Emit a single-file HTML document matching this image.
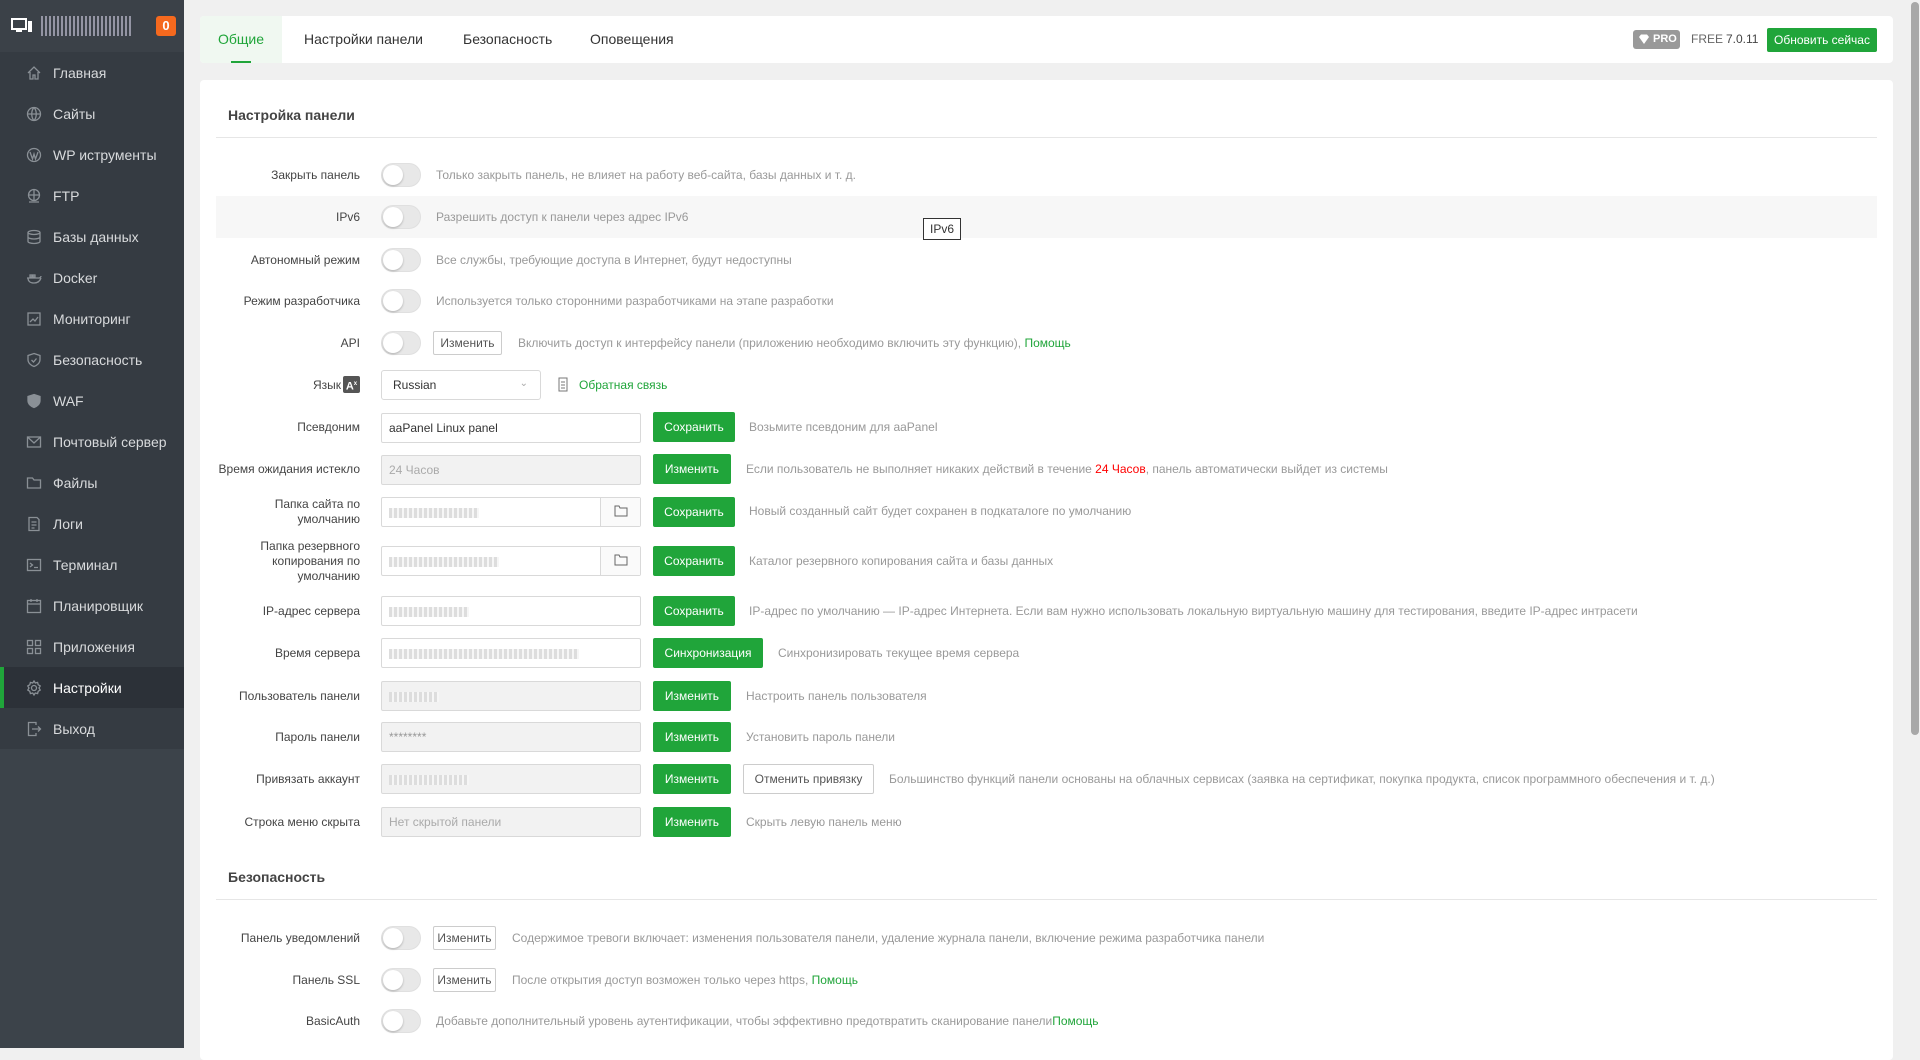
<!DOCTYPE html>
<html><head><meta charset="utf-8">
<style>
*{box-sizing:border-box;margin:0;padding:0}
body{width:1920px;height:1048px;overflow:hidden;background:#f0f0f0;font-family:"Liberation Sans","Noto Sans CJK SC",sans-serif;font-size:12px;color:#555;position:relative}
.sb{position:absolute;left:0;top:0;width:184px;height:1048px;background:#3c434a}
.logo{position:absolute;left:0;top:0;width:184px;height:52px;background:#3b4148}
.menu{position:absolute;left:0;top:52px;width:184px;background:#353b42}
.mi{height:41px;display:flex;align-items:center;padding-left:26px;color:#d8dadc;font-size:14px;position:relative}
.mi svg{width:16px;height:16px;margin-right:11px;stroke:#8a9096;fill:none;stroke-width:1.3}
.mi.act{background:#2c3138;color:#fff}
.mi.act:before{content:"";position:absolute;left:0;top:0;width:4px;height:41px;background:#20a53a}
.tabs{position:absolute;left:200px;top:16px;width:1693px;height:47px;background:#fff;border-radius:4px}
.tab{position:absolute;top:0;height:47px;line-height:47px;font-size:14px;color:#333}
.card{position:absolute;left:200px;top:80px;width:1693px;height:980px;background:#fff;border-radius:4px}
.h{position:absolute;left:228px;font-size:14px;font-weight:bold;color:#444}
.hl{position:absolute;left:216px;width:1661px;height:1px;background:#e6e6e6}
.lab{position:absolute;left:216px;width:144px;text-align:right;font-size:12px;color:#444;line-height:15px}
.tg{position:absolute;left:381px;width:40px;height:24px;border-radius:12px;background:#e8e8e8;border:1px solid #e0e0e0}
.tg:after{content:"";position:absolute;left:1px;top:1px;width:20px;height:20px;border-radius:50%;background:#fff;box-shadow:0 1px 2px rgba(0,0,0,.25)}
.d{position:absolute;font-size:12px;color:#999;white-space:nowrap}
.in{position:absolute;left:381px;width:260px;height:30px;border:1px solid #d9d9d9;border-radius:2px;background:#fff;font-size:12px;color:#333;line-height:28px;padding-left:7px}
.in.dis{background:#f2f2f2;color:#aaa}
.blur{display:inline-block;width:90px;height:10px;vertical-align:middle;background:repeating-linear-gradient(90deg,#ddd 0 3px,#f6f6f6 3px 5px)}
.fb{position:absolute;right:0;top:0;width:40px;height:28px;border-left:1px solid #d9d9d9;background:#fafafa}
.gb{position:absolute;left:653px;height:30px;line-height:30px;background:#20a53a;color:#fff;font-size:12px;text-align:center;border-radius:2px}
.wb{position:absolute;height:24px;line-height:22px;border:1px solid #ccc;background:#fff;color:#555;font-size:12px;text-align:center;border-radius:2px}
.g{color:#20a53a}
</style></head><body>
<div class="sb">
 <div class="logo">
  <svg style="position:absolute;left:11px;top:18px" width="22" height="16" viewBox="0 0 22 16"><rect x="1" y="1" width="14" height="10" fill="none" stroke="#fff" stroke-width="2"/><rect x="5" y="12" width="6" height="2" fill="#fff"/><rect x="17" y="3" width="4" height="11" fill="#fff"/></svg>
  <div style="position:absolute;left:41px;top:16px;width:92px;height:20px;background:repeating-linear-gradient(90deg,#aab 0 2px,#3b4148 2px 4px);opacity:.8"></div>
  <div style="position:absolute;left:156px;top:16px;width:20px;height:20px;background:#f5691e;border-radius:3px;color:#fff;font-weight:bold;font-size:13px;text-align:center;line-height:20px">0</div>
 </div>
 <div class="menu">
  <div class="mi"><svg viewBox="0 0 16 16"><path d="M2 8L8 2l6 6M4 7v7h3v-4h2v4h3V7"/></svg>Главная</div>
  <div class="mi"><svg viewBox="0 0 16 16"><circle cx="8" cy="8" r="6.5"/><path d="M1.5 8h13M8 1.5c-3 3-3 10 0 13M8 1.5c3 3 3 10 0 13"/></svg>Сайты</div>
  <div class="mi"><svg viewBox="0 0 16 16"><circle cx="8" cy="8" r="6.5"/><path d="M4 5l2.5 7L8 7l1.5 5L12 5"/></svg>WP иструменты</div>
  <div class="mi"><svg viewBox="0 0 16 16"><circle cx="8" cy="7" r="5.5"/><path d="M2.5 7h11M8 1.5v11M3 14h10"/></svg>FTP</div>
  <div class="mi"><svg viewBox="0 0 16 16"><ellipse cx="8" cy="3.5" rx="6" ry="2"/><path d="M2 3.5v9c0 1.1 2.7 2 6 2s6-.9 6-2v-9M2 8c0 1.1 2.7 2 6 2s6-.9 6-2"/></svg>Базы данных</div>
  <div class="mi"><svg viewBox="0 0 16 16"><path d="M1 8h12c1 0 2-1 2-2M2 8c0 3 2 5 6 5s6-2 7-5" /><rect x="4" y="5" width="2" height="2"/><rect x="7" y="5" width="2" height="2"/></svg>Docker</div>
  <div class="mi"><svg viewBox="0 0 16 16"><rect x="2" y="2" width="12" height="12"/><path d="M4 11l3-3 2 2 3-4"/></svg>Мониторинг</div>
  <div class="mi"><svg viewBox="0 0 16 16"><path d="M8 1.5l6 2v4c0 3.5-3 6-6 7-3-1-6-3.5-6-7v-4z M5.5 8l2 2 3-3.5"/></svg>Безопасность</div>
  <div class="mi"><svg viewBox="0 0 16 16"><path d="M8 1.5l6 2v4c0 3.5-3 6-6 7-3-1-6-3.5-6-7v-4z" fill="#8a9096"/></svg>WAF</div>
  <div class="mi"><svg viewBox="0 0 16 16"><rect x="1.5" y="3" width="13" height="10"/><path d="M1.5 3L8 9l6.5-6"/></svg>Почтовый сервер</div>
  <div class="mi"><svg viewBox="0 0 16 16"><path d="M1.5 3h5l1.5 2h6.5v8h-13z"/></svg>Файлы</div>
  <div class="mi"><svg viewBox="0 0 16 16"><path d="M3 1.5h8l2 2v11H3zM5.5 6h5M5.5 9h5M5.5 12h3"/></svg>Логи</div>
  <div class="mi"><svg viewBox="0 0 16 16"><rect x="1.5" y="2.5" width="13" height="11"/><path d="M4 6l2.5 2L4 10M8 10.5h4"/></svg>Терминал</div>
  <div class="mi"><svg viewBox="0 0 16 16"><rect x="1.5" y="2.5" width="13" height="12"/><path d="M1.5 6h13M5 1v3M11 1v3"/></svg>Планировщик</div>
  <div class="mi"><svg viewBox="0 0 16 16"><rect x="1.5" y="1.5" width="5" height="5"/><rect x="9.5" y="1.5" width="5" height="5"/><rect x="1.5" y="9.5" width="5" height="5"/><rect x="9.5" y="9.5" width="5" height="5"/></svg>Приложения</div>
  <div class="mi act"><svg viewBox="0 0 16 16"><circle cx="8" cy="8" r="2.5"/><path d="M8 1l1.3 2 2.3-.6.6 2.3 2 1.3-1.2 2 1.2 2-2 1.3-.6 2.3-2.3-.6L8 15l-1.3-2-2.3.6-.6-2.3-2-1.3 1.2-2-1.2-2 2-1.3.6-2.3 2.3.6z"/></svg>Настройки</div>
  <div class="mi"><svg viewBox="0 0 16 16"><path d="M10 4V1.5H2.5v13H10V12M6 8h8.5M12 5.5L14.5 8 12 10.5"/></svg>Выход</div>
 </div>
</div>

<div class="tabs">
 <div style="position:absolute;left:0;top:0;width:82px;height:47px;background:#f0f8f1;border-radius:4px 0 0 4px"></div>
 <div class="tab" style="left:18px;color:#20a53a">Общие</div>
 <div style="position:absolute;left:31px;top:45px;width:20px;height:2px;background:#20a53a"></div>
 <div class="tab" style="left:104px">Настройки панели</div>
 <div class="tab" style="left:263px">Безопасность</div>
 <div class="tab" style="left:390px">Оповещения</div>
 <div style="position:absolute;left:1433px;top:14px;width:47px;height:19px;background:#999;border-radius:3px;color:#fff;font-size:11px;font-weight:bold;line-height:19px;padding-left:20px">PRO<svg style="position:absolute;left:5px;top:4px" width="12" height="11" viewBox="0 0 12 11"><path d="M1 3l2-2.5h6L11 3 6 10z" fill="#fff"/></svg></div>
 <div style="position:absolute;left:1491px;top:16px;font-size:12px;color:#666">FREE</div>
 <div style="position:absolute;left:1526px;top:16px;font-size:12px;color:#444">7.0.11</div>
 <div style="position:absolute;left:1567px;top:12px;width:110px;height:24px;background:#20a53a;color:#fff;font-size:12px;line-height:24px;text-align:center;border-radius:2px">Обновить сейчас</div>
</div>

<div class="card"></div>
<div style="position:absolute;left:1910px;top:0;width:10px;height:1048px;background:#f0f0f0"></div>
<div style="position:absolute;left:1911px;top:2px;width:8px;height:733px;background:#a8a8a8;border-radius:4px"></div>

<div class="h" style="top:107px">Настройка панели</div>
<div class="hl" style="top:137px"></div>
<div style="position:absolute;left:216px;top:196px;width:1661px;height:42px;background:#f7f7f7"></div>

<div class="lab" style="top:168px">Закрыть панель</div><div class="tg" style="top:163px"></div>
<div class="d" style="left:436px;top:168px">Только закрыть панель, не влияет на работу веб-сайта, базы данных и т. д.</div>

<div class="lab" style="top:210px">IPv6</div><div class="tg" style="top:205px"></div>
<div class="d" style="left:436px;top:210px">Разрешить доступ к панели через адрес IPv6</div>
<div style="position:absolute;left:923px;top:218px;width:38px;height:22px;border:1px solid #333;background:#fff;font-size:12px;color:#333;text-align:center;line-height:20px">IPv6</div>

<div class="lab" style="top:253px">Автономный режим</div><div class="tg" style="top:248px"></div>
<div class="d" style="left:436px;top:253px">Все службы, требующие доступа в Интернет, будут недоступны</div>

<div class="lab" style="top:294px">Режим разработчика</div><div class="tg" style="top:289px"></div>
<div class="d" style="left:436px;top:294px">Используется только сторонними разработчиками на этапе разработки</div>

<div class="lab" style="top:336px">API</div><div class="tg" style="top:331px"></div>
<div class="wb" style="left:433px;top:331px;width:69px">Изменить</div>
<div class="d" style="left:518px;top:336px">Включить доступ к интерфейсу панели (приложению необходимо включить эту функцию), <span class="g">Помощь</span></div>

<div class="lab" style="top:378px;width:125px">Язык</div>
<div style="position:absolute;left:343px;top:376px;width:17px;height:17px;background:#555;color:#fff;font-size:11px;font-weight:bold;text-align:center;line-height:17px;border-radius:2px">A<sup style="font-size:6px">x</sup></div>
<div class="in" style="top:370px;width:160px;height:30px;padding-left:11px;border-radius:3px">Russian<span style="position:absolute;right:12px;top:-1px;color:#aaa;font-size:10px">&#8964;</span></div>
<svg style="position:absolute;left:558px;top:377px" width="13" height="15" viewBox="0 0 13 15"><path d="M1 1h8v13H1zM3 5h4M3 8h4M3 11h4" fill="none" stroke="#777"/></svg>
<div class="d" style="left:579px;top:378px;color:#20a53a">Обратная связь</div>

<div class="lab" style="top:420px">Псевдоним</div>
<div class="in" style="top:413px">aaPanel Linux panel</div>
<div class="gb" style="top:412px;width:82px">Сохранить</div>
<div class="d" style="left:749px;top:420px">Возьмите псевдоним для aaPanel</div>

<div class="lab" style="top:462px">Время ожидания истекло</div>
<div class="in dis" style="top:455px">24 Часов</div>
<div class="gb" style="top:454px;width:78px">Изменить</div>
<div class="d" style="left:746px;top:462px">Если пользователь не выполняет никаких действий в течение <span style="color:#f00">24 Часов</span>, панель автоматически выйдет из системы</div>

<div class="lab" style="top:497px">Папка сайта по<br>умолчанию</div>
<div class="in" style="top:497px"><span class="blur"></span><div class="fb"><svg style="margin:7px 13px" width="14" height="12" viewBox="0 0 14 12"><path d="M1 1h4l1 2h7v8H1z" fill="none" stroke="#666"/></svg></div></div>
<div class="gb" style="top:497px;width:82px">Сохранить</div>
<div class="d" style="left:749px;top:504px">Новый созданный сайт будет сохранен в подкаталоге по умолчанию</div>

<div class="lab" style="top:539px">Папка резервного<br>копирования по<br>умолчанию</div>
<div class="in" style="top:546px"><span class="blur" style="width:110px"></span><div class="fb"><svg style="margin:7px 13px" width="14" height="12" viewBox="0 0 14 12"><path d="M1 1h4l1 2h7v8H1z" fill="none" stroke="#666"/></svg></div></div>
<div class="gb" style="top:546px;width:82px">Сохранить</div>
<div class="d" style="left:749px;top:554px">Каталог резервного копирования сайта и базы данных</div>

<div class="lab" style="top:604px">IP-адрес сервера</div>
<div class="in" style="top:596px"><span class="blur" style="width:80px"></span></div>
<div class="gb" style="top:596px;width:82px">Сохранить</div>
<div class="d" style="left:749px;top:604px">IP-адрес по умолчанию — IP-адрес Интернета. Если вам нужно использовать локальную виртуальную машину для тестирования, введите IP-адрес интрасети</div>

<div class="lab" style="top:646px">Время сервера</div>
<div class="in" style="top:638px"><span class="blur" style="width:190px"></span></div>
<div class="gb" style="top:638px;width:110px">Синхронизация</div>
<div class="d" style="left:778px;top:646px">Синхронизировать текущее время сервера</div>

<div class="lab" style="top:689px">Пользователь панели</div>
<div class="in dis" style="top:681px"><span class="blur" style="width:50px"></span></div>
<div class="gb" style="top:681px;width:78px">Изменить</div>
<div class="d" style="left:746px;top:689px">Настроить панель пользователя</div>

<div class="lab" style="top:730px">Пароль панели</div>
<div class="in dis" style="top:722px;color:#999">********</div>
<div class="gb" style="top:722px;width:78px">Изменить</div>
<div class="d" style="left:746px;top:730px">Установить пароль панели</div>

<div class="lab" style="top:772px">Привязать аккаунт</div>
<div class="in dis" style="top:764px"><span class="blur" style="width:80px"></span></div>
<div class="gb" style="top:764px;width:78px">Изменить</div>
<div class="wb" style="left:743px;top:764px;width:131px;height:30px;line-height:28px">Отменить привязку</div>
<div class="d" style="left:889px;top:772px">Большинство функций панели основаны на облачных сервисах (заявка на сертификат, покупка продукта, список программного обеспечения и т. д.)</div>

<div class="lab" style="top:815px">Строка меню скрыта</div>
<div class="in dis" style="top:807px">Нет скрытой панели</div>
<div class="gb" style="top:807px;width:78px">Изменить</div>
<div class="d" style="left:746px;top:815px">Скрыть левую панель меню</div>

<div class="h" style="top:869px">Безопасность</div>
<div class="hl" style="top:899px"></div>

<div class="lab" style="top:931px">Панель уведомлений</div><div class="tg" style="top:926px"></div>
<div class="wb" style="left:433px;top:926px;width:63px">Изменить</div>
<div class="d" style="left:512px;top:931px">Содержимое тревоги включает: изменения пользователя панели, удаление журнала панели, включение режима разработчика панели</div>

<div class="lab" style="top:973px">Панель SSL</div><div class="tg" style="top:968px"></div>
<div class="wb" style="left:433px;top:968px;width:63px">Изменить</div>
<div class="d" style="left:512px;top:973px">После открытия доступ возможен только через https, <span class="g">Помощь</span></div>

<div class="lab" style="top:1014px">BasicAuth</div><div class="tg" style="top:1009px"></div>
<div class="d" style="left:436px;top:1014px">Добавьте дополнительный уровень аутентификации, чтобы эффективно предотвратить сканирование панели<span class="g">Помощь</span></div>
</body></html>
